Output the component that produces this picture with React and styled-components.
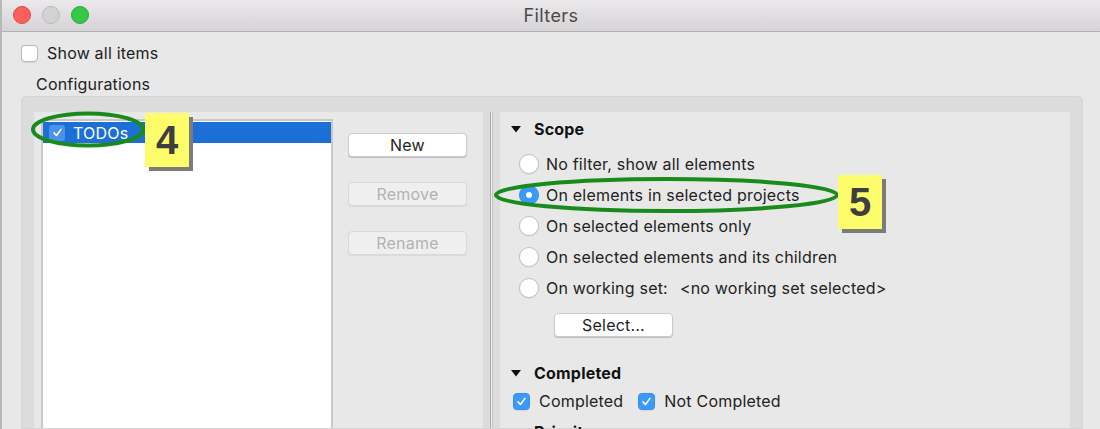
import React from 'react';
import styled, { createGlobalStyle } from 'styled-components';

const GlobalStyle = createGlobalStyle`
    html, body {
        margin: 0;
        padding: 0;
        background: #e8e8e8;
    }
    body {
        font-family: Inter, "Noto Sans", "Liberation Sans", sans-serif;
        color: #222222;
        letter-spacing: 0.2px;
    }
`

const Window = styled.div`
    position: relative;
    width: 1100px;
    height: 429px;
    overflow: hidden;
    background: #e8e8e8;
    display: flex;
    flex-direction: column;
    border-left: 2px solid #b8b8b8;
    box-sizing: border-box;
`

const TitleBar = styled.div`
    height: 32px;
    flex: none;
    box-sizing: border-box;
    display: flex;
    align-items: center;
    justify-content: center;
    position: relative;
    background: linear-gradient(#ebe9eb, #d5d3d5);
    border-bottom: 1px solid #b1b1b1;
    font-size: 18px;
    letter-spacing: 0.4px;
    color: #4a4a4a;
`

const Lights = styled.div`
    position: absolute;
    left: 11px;
    top: 6px;
    display: flex;
    gap: 11px;
`

const Light = styled.span`
    width: 18px;
    height: 18px;
    border-radius: 50%;
    box-sizing: border-box;
    background: ${p => p.color};
    border: 1px solid ${p => p.edge};
`

const Body = styled.div`
    flex: 1;
    display: flex;
    flex-direction: column;
    padding: 11px 17px 0 19px;
    min-height: 0;
`

const CheckRow = styled.label`
    display: flex;
    align-items: center;
    gap: ${p => p.gap || 9}px;
    font-size: 16px;
    height: 20px;
`

const Box = styled.span`
    width: 17px;
    height: 17px;
    box-sizing: border-box;
    border-radius: 4px;
    flex: none;
    display: flex;
    align-items: center;
    justify-content: center;
    background: ${p => p.checked ? '#3b99fc' : '#ffffff'};
    border: 1px solid ${p => p.checked ? '#3490f0' : '#b9b9b9'};
    box-shadow: 0 0.5px 1px rgba(0,0,0,0.08);
`

const GroupTitle = styled.div`
    font-size: 16px;
    margin: 11px 0 0 15px;
    height: 20px;
    line-height: 20px;
`

const GroupBox = styled.div`
    margin-top: 2px;
    flex: 1;
    background: #dddcdd;
    border: 1px solid #d6d5d6;
    border-radius: 5px 5px 0 0;
    padding: 15px 12px 0 12px;
    display: flex;
    min-height: 0;
`

const LeftPane = styled.div`
    width: 449px;
    flex: none;
    background: #e8e8e8;
    display: flex;
    padding: 7px 0 0 7px;
    box-sizing: border-box;
`

const List = styled.div`
    width: 292px;
    background: #ffffff;
    border: 2px solid #c8c8c8;
    border-bottom: none;
    box-sizing: border-box;
    padding-top: 1px;
`

const ListRow = styled.div`
    height: 21px;
    display: flex;
    align-items: center;
    gap: 8px;
    padding-left: 6px;
    background: ${p => p.selected ? '#1b6fd7' : 'transparent'};
    color: ${p => p.selected ? '#ffffff' : '#222'};
    font-size: 16px;
`

const RowCheck = styled.span`
    width: 16px;
    height: 16px;
    border-radius: 3px;
    background: #4b92ea;
    display: flex;
    align-items: center;
    justify-content: center;
`

const ButtonColumn = styled.div`
    display: flex;
    flex-direction: column;
    gap: 25px;
    margin: 14px 0 0 15px;
`

const Button = styled.div`
    width: ${p => p.w || 119}px;
    height: 24px;
    box-sizing: border-box;
    border-radius: 4px;
    display: flex;
    align-items: center;
    justify-content: center;
    font-size: 16px;
    background: ${p => p.disabled ? '#f0eff0' : '#ffffff'};
    color: ${p => p.disabled ? '#b2b2b2' : '#1e1e1e'};
    border: 1px solid ${p => p.disabled ? '#d9d9d9' : '#cbcbcb'};
    box-shadow: 0 1px 1px ${p => p.disabled ? 'rgba(0,0,0,0.06)' : 'rgba(0,0,0,0.18)'};
`

const Sash = styled.div`
    width: 17px;
    flex: none;
    display: flex;
    justify-content: center;
    &::before {
        content: '';
        width: 3px;
        margin-left: -1px;
        background: linear-gradient(90deg, #a9a9a9 0 1px, #efefef 1px 2px, #c4c4c4 2px 3px);
    }
`

const RightPane = styled.div`
    flex: 1;
    background: #e8e8e8;
    padding: 7px 0 0 11px;
    display: flex;
    flex-direction: column;
`

const SectionHead = styled.div`
    display: flex;
    align-items: center;
    gap: 13px;
    height: 20px;
    font-size: 16px;
    font-weight: 700;
    color: #111;
    margin-top: ${p => p.mt || 0}px;
`

const RadioList = styled.div`
    display: flex;
    flex-direction: column;
    gap: 11px;
    margin: 15px 0 0 8px;
`

const RadioRow = styled.label`
    display: flex;
    align-items: center;
    gap: 7px;
    height: 20px;
    font-size: 16px;
`

const Radio = styled.span`
    width: 20px;
    height: 20px;
    box-sizing: border-box;
    border-radius: 50%;
    flex: none;
    display: flex;
    align-items: center;
    justify-content: center;
    background: ${p => p.checked ? '#3b99fc' : '#ffffff'};
    border: 1px solid ${p => p.checked ? '#3491f3' : '#c2c2c2'};
    box-shadow: 0 0.5px 1px rgba(0,0,0,0.1);
    &::after {
        content: '';
        display: ${p => p.checked ? 'block' : 'none'};
        width: 6px;
        height: 6px;
        border-radius: 50%;
        background: #ffffff;
    }
`

const Hint = styled.span`
    margin-left: 5px;
`

const SelectWrap = styled.div`
    margin: 15px 0 0 43px;
`

const CheckLine = styled.div`
    display: flex;
    gap: 15px;
    margin: 8px 0 0 2px;
`

const Annotation = styled.svg`
    position: absolute;
    left: ${p => p.x}px;
    top: ${p => p.y}px;
    overflow: visible;
    pointer-events: none;
`

const Callout = styled.div`
    position: absolute;
    left: ${p => p.x}px;
    top: ${p => p.y}px;
    width: 44px;
    height: 54px;
    background: #fdfd6c;
    box-shadow: 4px 4px 0 #7b7b7b;
    display: flex;
    align-items: center;
    justify-content: center;
    font-family: "Liberation Sans", Arial, sans-serif;
    font-weight: 700;
    font-size: 40px;
    letter-spacing: 0;
    color: #3e3e3e;
`

const Check = ({ size = 11 }) => (
    <svg width={size} height={size} viewBox="0 0 12 12">
        <path d="M2.2 6.4 L4.9 9.2 L9.8 2.6" fill="none" stroke="#ffffff" strokeWidth="1.7" strokeLinecap="round" strokeLinejoin="round" />
    </svg>
)

const Disclosure = () => (
    <svg width="10" height="7" viewBox="0 0 10 7">
        <path d="M0 0 L10 0 L5 6.5 Z" fill="#111" />
    </svg>
)

const scopeOptions = [
    'No filter, show all elements',
    'On elements in selected projects',
    'On selected elements only',
    'On selected elements and its children',
    'On working set:',
]

export default function App() {
    return (
        <>
            <GlobalStyle />
            <Window>
                <TitleBar>
                    <Lights>
                        <Light color="#fc605c" edge="#e0463f" />
                        <Light color="#d3d2d3" edge="#bdbcbd" />
                        <Light color="#35c84a" edge="#27aa36" />
                    </Lights>
                    Filters
                </TitleBar>
                <Body>
                    <CheckRow>
                        <Box />
                        Show all items
                    </CheckRow>
                    <GroupTitle>Configurations</GroupTitle>
                    <GroupBox>
                        <LeftPane>
                            <List>
                                <ListRow selected>
                                    <RowCheck><Check /></RowCheck>
                                    TODOs
                                </ListRow>
                            </List>
                            <ButtonColumn>
                                <Button>New</Button>
                                <Button disabled>Remove</Button>
                                <Button disabled>Rename</Button>
                            </ButtonColumn>
                        </LeftPane>
                        <Sash />
                        <RightPane>
                            <SectionHead><Disclosure />Scope</SectionHead>
                            <RadioList>
                                {scopeOptions.map((label, i) => (
                                    <RadioRow key={label}>
                                        <Radio checked={i === 1} />
                                        {label}
                                        {i === 4 && <Hint>&lt;no working set selected&gt;</Hint>}
                                    </RadioRow>
                                ))}
                            </RadioList>
                            <SelectWrap>
                                <Button>Select...</Button>
                            </SelectWrap>
                            <SectionHead mt={26}><Disclosure />Completed</SectionHead>
                            <CheckLine>
                                <CheckRow gap={9}><Box checked><Check /></Box>Completed</CheckRow>
                                <CheckRow gap={9}><Box checked><Check /></Box>Not Completed</CheckRow>
                            </CheckLine>
                            <SectionHead mt={11}><span style={{ width: 10 }} />Priority</SectionHead>
                        </RightPane>
                    </GroupBox>
                </Body>

                <Annotation x={29} y={112} width="116" height="37">
                    <ellipse cx="57" cy="17.5" rx="55" ry="16" fill="none" stroke="#198b1d" strokeWidth="4" />
                </Annotation>
                <Callout x={143} y={113}>4</Callout>

                <Annotation x={492} y={177} width="346" height="37">
                    <ellipse cx="172.5" cy="18" rx="170.5" ry="16" fill="none" stroke="#198b1d" strokeWidth="4" />
                </Annotation>
                <Callout x={836} y={175}>5</Callout>
            </Window>
        </>
    );
}
